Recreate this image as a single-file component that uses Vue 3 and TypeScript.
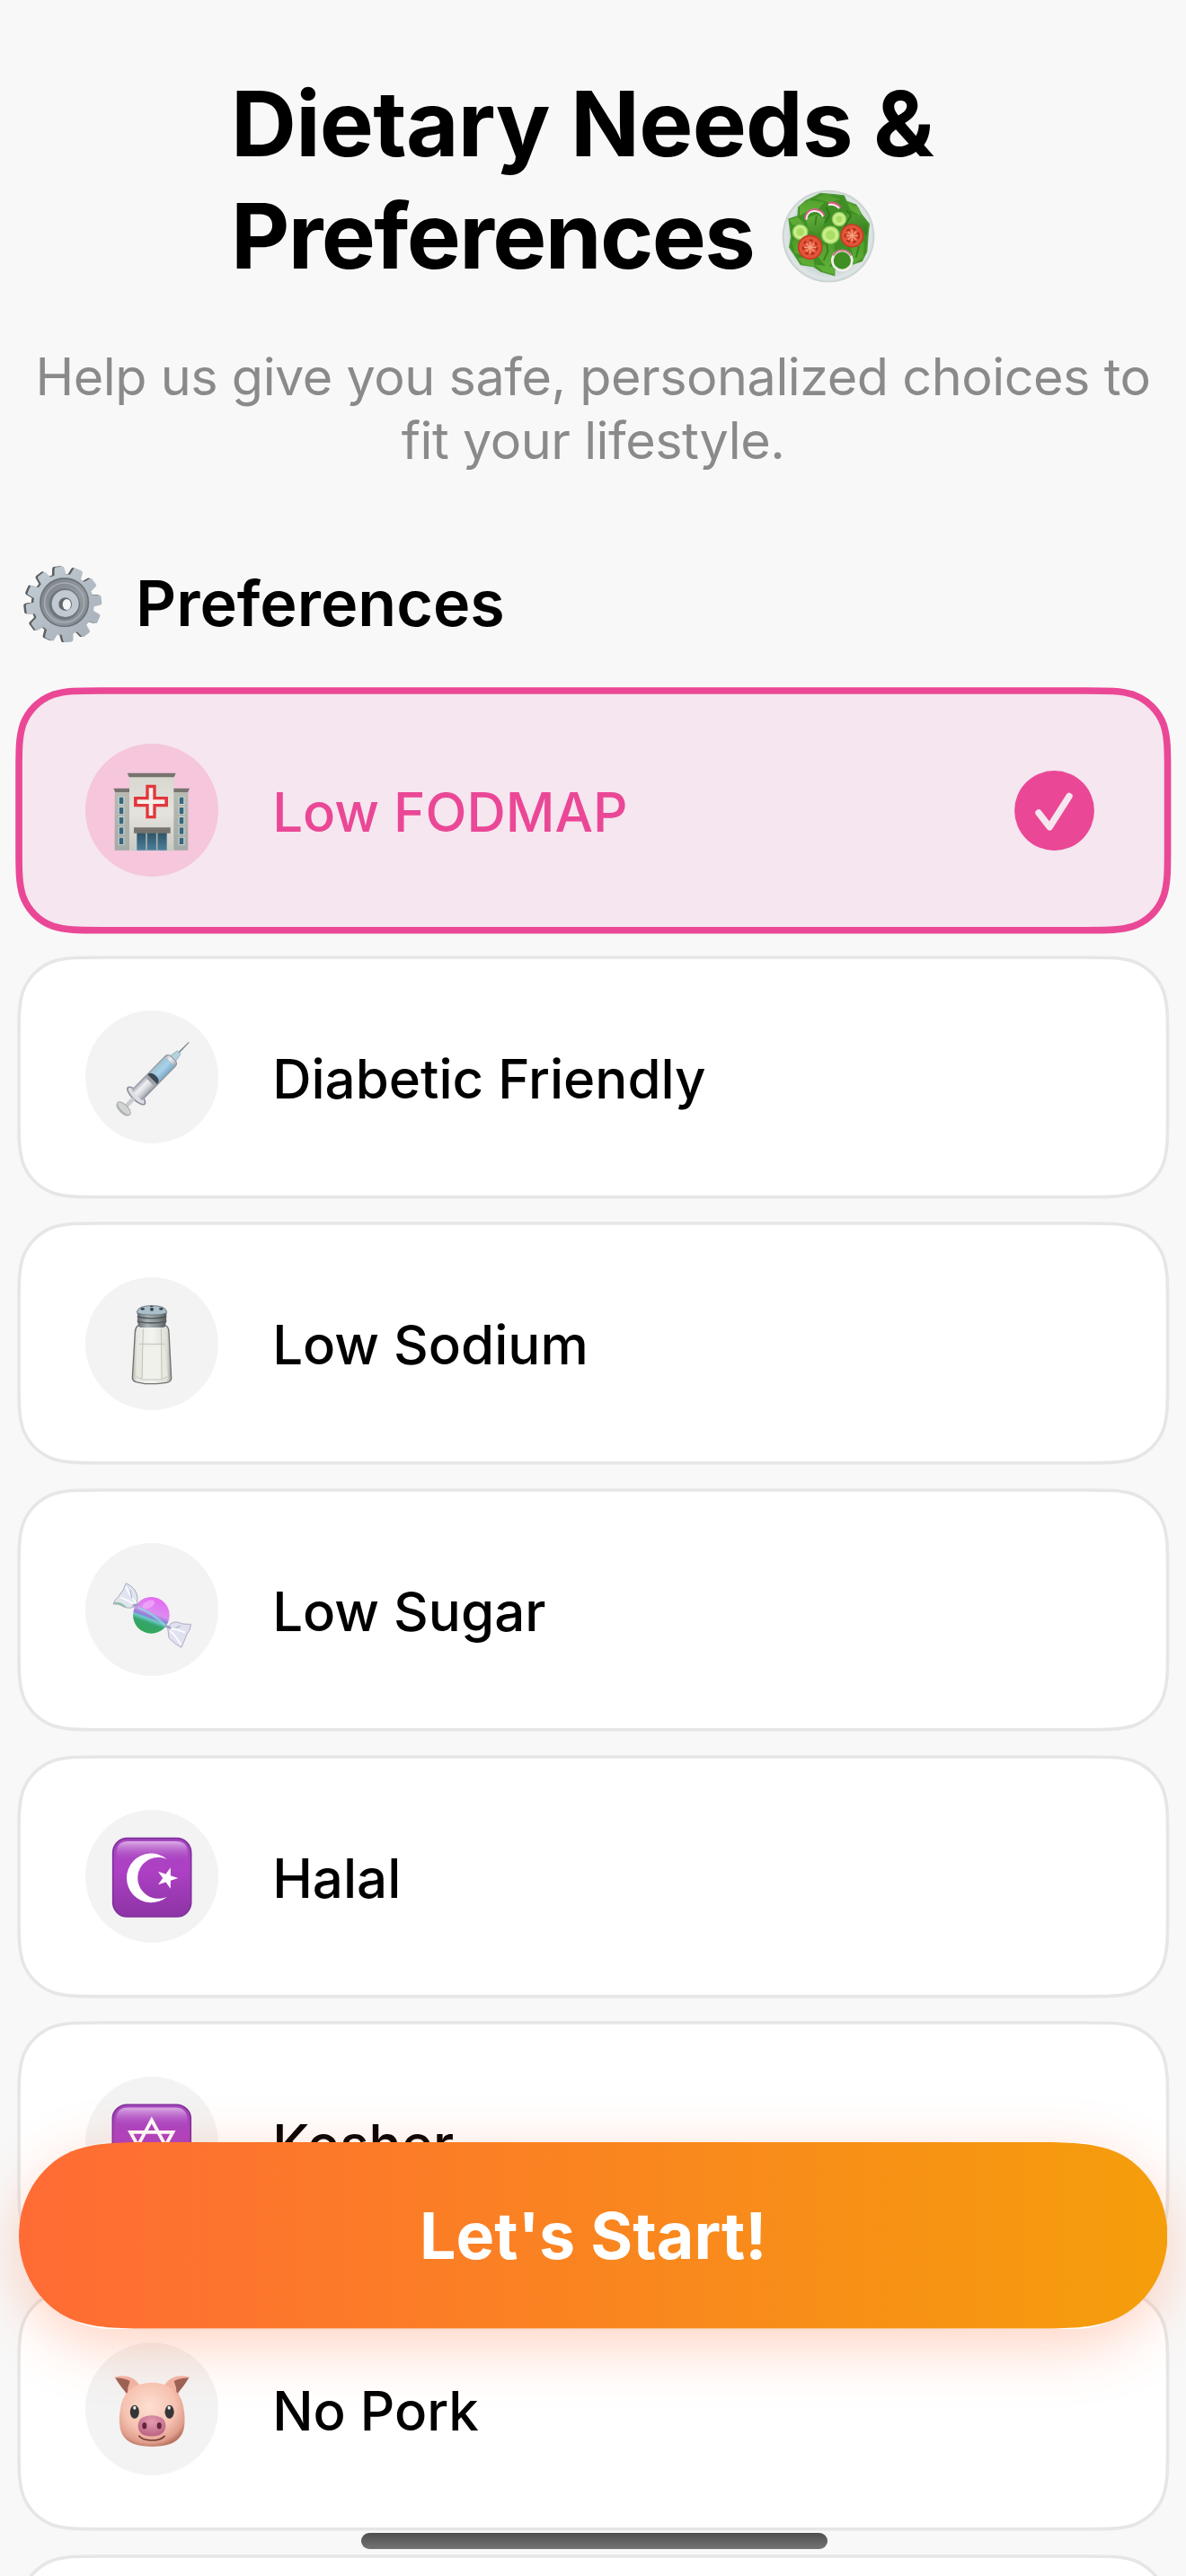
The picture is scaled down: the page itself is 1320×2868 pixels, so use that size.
<script setup lang="ts">
interface Preference {
  id: string
  label: string
  selected?: boolean
}

const preferences: Preference[] = [
  { id: 'fodmap', label: 'Low FODMAP', selected: true },
  { id: 'diabetic', label: 'Diabetic Friendly' },
  { id: 'sodium', label: 'Low Sodium' },
  { id: 'sugar', label: 'Low Sugar' },
  { id: 'halal', label: 'Halal' },
  { id: 'kosher', label: 'Kosher' },
  { id: 'pork', label: 'No Pork' },
  { id: 'last', label: '' },
]

// Outline of a rectangle with continuously curved corners.
function smoothRect(x: number, y: number, w: number, h: number, r: number): string {
  const X = x + w
  const Y = y + h
  const a = 1.528665 * r, b = 1.088493 * r, c = 0.868407 * r
  const d = 0.631494 * r, e = 0.074911 * r, f = 0.372824 * r, g = 0.16906 * r
  return [
    `M${x + a} ${y}H${X - a}`,
    `C${X - b} ${y} ${X - c} ${y} ${X - d} ${y + e}`,
    `C${X - f} ${y + g} ${X - g} ${y + f} ${X - e} ${y + d}`,
    `C${X} ${y + c} ${X} ${y + b} ${X} ${y + a}V${Y - a}`,
    `C${X} ${Y - b} ${X} ${Y - c} ${X - e} ${Y - d}`,
    `C${X - g} ${Y - f} ${X - f} ${Y - g} ${X - d} ${Y - e}`,
    `C${X - c} ${Y} ${X - b} ${Y} ${X - a} ${Y}H${x + a}`,
    `C${x + b} ${Y} ${x + c} ${Y} ${x + d} ${Y - e}`,
    `C${x + f} ${Y - g} ${x + g} ${Y - f} ${x + e} ${Y - d}`,
    `C${x} ${Y - c} ${x} ${Y - b} ${x} ${Y - a}V${y + a}`,
    `C${x} ${y + b} ${x} ${y + c} ${x + e} ${y + d}`,
    `C${x + g} ${y + f} ${x + f} ${y + g} ${x + d} ${y + e}`,
    `C${x + c} ${y} ${x + b} ${y} ${x + a} ${y}Z`,
  ].join('')
}

// Capsule whose ends ease into the straight edges.
function smoothPill(w: number, h: number): string {
  const r = h / 2
  const p = (n: number) => n * r
  return [
    `M${p(1.5287)} 0H${w - p(1.5287)}`,
    `C${w - p(1.0885)} 0 ${w - p(0.8684)} 0 ${w - p(0.6315)} ${p(0.0749)}`,
    `C${w - p(0.264)} ${p(0.192)} ${w} ${p(0.57)} ${w} ${r}`,
    `C${w} ${h - p(0.57)} ${w - p(0.264)} ${h - p(0.192)} ${w - p(0.6315)} ${h - p(0.0749)}`,
    `C${w - p(0.8684)} ${h} ${w - p(1.0885)} ${h} ${w - p(1.5287)} ${h}H${p(1.5287)}`,
    `C${p(1.0885)} ${h} ${p(0.8684)} ${h} ${p(0.6315)} ${h - p(0.0749)}`,
    `C${p(0.264)} ${h - p(0.192)} 0 ${h - p(0.57)} 0 ${r}`,
    `C0 ${p(0.57)} ${p(0.264)} ${p(0.192)} ${p(0.6315)} ${p(0.0749)}`,
    `C${p(0.8684)} 0 ${p(1.0885)} 0 ${p(1.5287)} 0Z`,
  ].join('')
}

function gear(cx: number, cy: number, inner: number, outer: number): string {
  const points: string[] = []
  for (let i = 0; i < 12; i++) {
    const mid = -97 + i * 30
    const corners: [number, number][] = [[-8.5, inner], [-5, outer], [5, outer], [8.5, inner]]
    for (const [offset, radius] of corners) {
      const t = ((mid + offset) * Math.PI) / 180
      points.push(`${(cx + radius * Math.cos(t)).toFixed(1)} ${(cy + radius * Math.sin(t)).toFixed(1)}`)
    }
  }
  return `M${points.join('L')}Z`
}

function star(cx: number, cy: number, outer: number, inner: number): string {
  const points: string[] = []
  for (let i = 0; i < 10; i++) {
    const radius = i % 2 ? inner : outer
    const t = (i * 36 * Math.PI) / 180
    points.push(`${(cx + radius * Math.cos(t)).toFixed(1)} ${(cy + radius * Math.sin(t)).toFixed(1)}`)
  }
  return `M${points.join('L')}Z`
}

const cardPath = smoothRect(5, 5, 1278.6, 266.7, 60)
const pillPath = smoothPill(1278.4, 207.5)
const gearPath = gear(168, 159, 96, 121)
const starPath = star(288, 243, 37, 14.5)
const windowRows = [204, 238, 271, 305, 339]
</script>

<template>
  <main class="screen">
    <header class="header">
      <h1 class="title">
        <span class="title-line">Dietary Needs &amp;</span>
        <span class="title-line">
          <span class="title-word">Preferences</span>
          <svg class="salad" viewBox="0 0 375 375" aria-hidden="true">
            <defs>
              <radialGradient id="plate"><stop offset=".8" stop-color="#cfd8d8" /><stop offset=".93" stop-color="#dfe6e8" /><stop offset="1" stop-color="#c6cecb" /></radialGradient>
              <linearGradient id="leafA" x1="0" y1="0" x2="1" y2="1"><stop stop-color="#6cb83f" /><stop offset="1" stop-color="#2f7a1c" /></linearGradient>
              <linearGradient id="leafB" x1="0" y1="0" x2="0" y2="1"><stop stop-color="#4d9c2b" /><stop offset="1" stop-color="#63b239" /></linearGradient>
            </defs>
            <circle cx="186" cy="189" r="154" fill="url(#plate)" />
            <path d="M132 60L160 46L206 50L238 54L246 72L278 84L296 116L322 148L318 182L314 240L298 272L262 284L240 300L206 298L206 320L160 306L136 290L94 284L72 250L56 226L62 190L54 132L84 122L86 92L112 70Z" fill="#3f8f25" stroke="#4f9c34" stroke-width="4" stroke-linejoin="round" />
            <path d="M90 120L90 88L122 68L172 76L150 100L112 108Z M140 62L176 48L226 66L188 76Z M248 74L288 94L294 122L258 100Z" fill="url(#leafB)" />
            <path d="M56 134L84 126L108 148L66 152Z M110 130L146 116L176 132L158 184L120 170Z M248 112L300 122L318 150L314 190L284 150L240 146Z" fill="url(#leafA)" />
            <path d="M64 206L88 192L96 250L74 246Z M84 262L134 256L140 290L98 282Z M160 222L204 210L208 258L184 298L150 256Z M262 228L306 206L302 260L272 280Z M140 284L206 292L204 316L168 306Z" fill="url(#leafB)" />
            <path d="M178 92L190 118L174 144M246 102L262 120L240 156M180 210L184 240L170 270M288 222L278 260M146 120L142 152M100 160L118 180" fill="none" stroke="#2a6d19" stroke-width="5" opacity=".75" />
            <path d="M110 132C110 90 166 94 170 122M186 80Q210 72 226 94" fill="none" stroke="#d85c82" stroke-width="9" />
            <path d="M112 134C114 96 160 98 168 124M186 84Q208 80 222 96" fill="none" stroke="#f8edf0" stroke-width="6" />
            <g fill="#c9ee8d" stroke="#8cc552" stroke-width="4"><circle cx="92" cy="175" r="25" /><circle cx="222" cy="132" r="23" /><circle cx="193" cy="185" r="29" /></g>
            <g fill="#aade65"><circle cx="92" cy="175" r="13" /><circle cx="222" cy="132" r="11" /><circle cx="193" cy="185" r="16" /></g>
            <g fill="#e25638" stroke="#c83a28" stroke-width="5"><circle cx="125" cy="226" r="39" /><circle cx="265" cy="187" r="37" /></g>
            <g fill="none" stroke="#b52f1d" stroke-width="8" stroke-dasharray="11 10"><circle cx="125" cy="226" r="23" /><circle cx="265" cy="187" r="22" /></g>
            <path d="M125 206V246M105 226H145M111 212L139 240M139 212L111 240M265 167V207M245 187H285M251 173L279 201M279 173L251 201" stroke="#f5a081" stroke-width="4" />
            <g fill="none"><circle cx="232" cy="270" r="33" stroke="#f1efe8" stroke-width="8" /><path d="M202 254A34 34 0 0 1 262 254" stroke="#cf6c8c" stroke-width="5" /></g>
          </svg>
        </span>
      </h1>
      <p class="subtitle">Help us give you safe, personalized choices to<br />fit your lifestyle.</p>
    </header>

    <section>
      <div class="section-head">
        <svg class="gear" viewBox="0 0 330 330" aria-hidden="true">
          <defs>
            <linearGradient id="steel" x1="0" y1="0" x2="1" y2="1"><stop stop-color="#c3ced5" /><stop offset=".5" stop-color="#b4bdc5" /><stop offset="1" stop-color="#a7afb8" /></linearGradient>
            <linearGradient id="dish" x1="0" y1="0" x2="1" y2="1"><stop stop-color="#7c8287" /><stop offset=".6" stop-color="#92999f" /><stop offset="1" stop-color="#7b8289" /></linearGradient>
          </defs>
          <path :d="gearPath" transform="translate(-7 -1)" fill="#5d5e5f" stroke="#5d5e5f" stroke-width="13" stroke-linejoin="round" />
          <path :d="gearPath" fill="url(#steel)" stroke="url(#steel)" stroke-width="12" stroke-linejoin="round" />
          <circle cx="170" cy="152" r="83" fill="url(#dish)" />
          <circle cx="170" cy="152" r="80" fill="none" stroke="#6a7176" stroke-width="4" />
          <circle cx="170" cy="153" r="66" fill="none" stroke="#a6adb2" stroke-width="5" />
          <circle cx="170" cy="158" r="52" fill="#6d757d" />
          <circle cx="173" cy="156" r="45" fill="#c1cad1" />
          <circle cx="173" cy="158" r="22" fill="#63686c" />
          <ellipse cx="178" cy="159" rx="14" ry="18" fill="#f4f5f5" />
        </svg>
        <h2 class="section-title">Preferences</h2>
      </div>

      <ul class="list">
        <li v-for="item in preferences" :key="item.id" class="card" :class="{ selected: item.selected }">
          <svg class="card-shape" viewBox="0 0 1288.6 276.7" aria-hidden="true"><path :d="cardPath" /></svg>
          <span class="badge">
            <svg v-if="item.id === 'fodmap'" class="glyph" viewBox="15 25 444 444" aria-hidden="true">
              <defs>
                <linearGradient id="wall" x1="0" y1="0" x2="0" y2="1"><stop stop-color="#d8d8cf" /><stop offset=".5" stop-color="#e4e3dc" /><stop offset="1" stop-color="#c9cac4" /></linearGradient>
                <linearGradient id="wing" x1="0" y1="0" x2="0" y2="1"><stop stop-color="#b9bbb1" /><stop offset="1" stop-color="#a4aaa7" /></linearGradient>
                <linearGradient id="door" x1="0" y1="0" x2="0" y2="1"><stop stop-color="#2e5366" /><stop offset="1" stop-color="#4b7f9b" /></linearGradient>
              </defs>
              <path d="M113 182H162V381H113ZM309 182H358V381H309Z" fill="url(#wing)" />
              <path d="M109 174H162V187H115ZM309 174H363L357 187H309Z" fill="#77736f" />
              <path d="M162 133H310V383H162Z" fill="url(#wall)" />
              <path d="M155 123H317L311 137H161Z" fill="#77736f" />
              <g v-for="y in windowRows" :key="y">
                <rect x="125" :y="y - 2" width="20" height="26" fill="#dce2df" /><rect x="128" :y="y" width="14" height="22" fill="#37677e" />
                <rect x="326" :y="y - 2" width="20" height="26" fill="#dce2df" /><rect x="329" :y="y" width="14" height="22" fill="#37677e" />
              </g>
              <path d="M217 162H251V202H291V236H251V275H217V236H177V202H217Z" fill="#e2373e" />
              <path d="M227 173H241V212H280V226H241V265H227V226H188V212H227Z" fill="#f5efe9" />
              <rect x="187" y="322" width="100" height="59" fill="url(#door)" />
              <path d="M219 322V381M254 322V381" stroke="#a9b2ae" stroke-width="5" />
              <path d="M177 305H299V324H177Z" fill="#77736f" />
            </svg>
            <svg v-else-if="item.id === 'diabetic'" class="glyph" viewBox="15 15 444 444" aria-hidden="true">
              <defs>
                <linearGradient id="barrel"><stop stop-color="#a7a9b2" /><stop offset=".35" stop-color="#f0f0f4" /><stop offset=".65" stop-color="#d3d4da" /><stop offset="1" stop-color="#989ba4" /></linearGradient>
                <linearGradient id="fluid"><stop stop-color="#9dc3d4" /><stop offset=".5" stop-color="#a8d2ea" /><stop offset="1" stop-color="#7cadc9" /></linearGradient>
              </defs>
              <g transform="translate(361 121) rotate(44.5)">
                <path d="M-1.5 0H1.5L3 58H-3Z" fill="#78858c" />
                <path d="M-8 48H8L13 78H-13Z" fill="#b4d2da" stroke="#83a0a8" stroke-width="2" />
                <path d="M-24 88Q-22 76 -10 76H10Q22 76 24 88V246H-24Z" fill="url(#barrel)" stroke="#8a9197" stroke-width="3" />
                <path d="M-21 90H21V164H-21Z" fill="url(#fluid)" />
                <ellipse cy="170" rx="22" ry="13" fill="#3f4754" />
                <path d="M-19 174H19V186H-19Z" fill="#9ea2aa" />
                <ellipse cy="251" rx="39" ry="14" fill="#dedfe4" stroke="#8b90a0" stroke-width="5" />
                <path d="M-24 232H24V249H-24Z" fill="url(#barrel)" />
                <path d="M-7 264H7V310H-7Z" fill="#c9cbcc" />
                <ellipse cy="314" rx="29" ry="14" fill="#b4b6b5" />
                <ellipse cy="310" rx="29" ry="12" fill="#d2d4d3" stroke="#a7aaaa" stroke-width="3" />
              </g>
            </svg>
            <svg v-else-if="item.id === 'sodium'" class="glyph" viewBox="15 6 444 444" aria-hidden="true">
              <defs>
                <linearGradient id="cap"><stop stop-color="#62686b" /><stop offset=".35" stop-color="#a9b4b8" /><stop offset=".7" stop-color="#858d90" /><stop offset="1" stop-color="#55595b" /></linearGradient>
                <linearGradient id="glass"><stop stop-color="#b3b4ad" /><stop offset=".12" stop-color="#e7e8e2" /><stop offset=".5" stop-color="#f4f4f0" /><stop offset=".88" stop-color="#dedfd7" /><stop offset="1" stop-color="#a1a39b" /></linearGradient>
              </defs>
              <path d="M190 168H284Q294 174 294 190L302 345Q300 356 286 358L254 362H214L184 356Q172 352 172 342L181 190Q181 176 190 168Z" fill="url(#glass)" stroke="#6f7270" stroke-width="4" />
              <path d="M196 240Q236 226 278 236L291 344L260 352H212L183 342Z" fill="#e8e8df" />
              <path d="M206 238Q236 232 270 236L266 350H208Z" fill="#f1f1eb" />
              <path d="M194 229H280M208 178L204 344M268 178L270 344M184 338L206 348H266L292 338" fill="none" stroke="#c1c3bb" stroke-width="3" />
              <path d="M187 120H287L285 140Q288 154 283 162Q284 172 274 174H200Q190 172 191 162Q186 154 190 140Z" fill="url(#cap)" />
              <path d="M188 138Q237 149 286 138M190 154Q237 164 284 154" fill="none" stroke="#4f5759" stroke-width="4" />
              <path d="M187 123Q189 101 237 101T287 123Q280 132 237 132T187 123Z" fill="#a9bfc9" stroke="#747c80" stroke-width="3" />
              <g fill="#35434a"><circle cx="237" cy="113" r="6" /><ellipse cx="206" cy="112" rx="7" ry="4" /><ellipse cx="268" cy="112" rx="7" ry="4" /><ellipse cx="236" cy="103" rx="6" ry="2" /></g>
            </svg>
            <svg v-else-if="item.id === 'sugar'" class="glyph" viewBox="15 895 444 444" aria-hidden="true">
              <defs>
                <linearGradient id="ball" x1=".65" y1="0" x2=".28" y2="1"><stop stop-color="#e668f2" /><stop offset=".42" stop-color="#dc8df0" /><stop offset=".54" stop-color="#8a80d6" /><stop offset=".6" stop-color="#6cc9c9" /><stop offset=".7" stop-color="#35a46c" /><stop offset="1" stop-color="#34a856" /></linearGradient>
              </defs>
              <path d="M151 1029Q188 1046 189 1080L186 1104Q164 1118 142 1107Q126 1096 108 1099Q112 1084 125 1074Q142 1056 151 1029Z" fill="#dfe4ef" stroke="#aaa9bd" stroke-width="3" />
              <path d="M290 1178Q300 1156 322 1159Q340 1168 367 1166Q368 1184 354 1199Q346 1222 335 1244Q310 1230 294 1212Z" fill="#e0e1f0" stroke="#b5a9c4" stroke-width="3" />
              <path d="M150 1040Q158 1062 186 1098M132 1076Q158 1086 182 1102M298 1180Q326 1184 348 1194M298 1188Q318 1206 334 1234" fill="none" stroke="#fafaff" stroke-width="6" />
              <path d="M165 1052L170 1080M334 1172L316 1178" fill="none" stroke="#b6b8d2" stroke-width="4" />
              <path d="M112 1096Q130 1092 148 1108" fill="none" stroke="#77bd92" stroke-width="5" />
              <circle cx="235" cy="1136" r="61" fill="url(#ball)" />
              <path d="M190 1110Q240 1128 284 1172" fill="none" stroke="#8ad7df" stroke-width="8" opacity=".75" />
              <ellipse cx="226" cy="1100" rx="22" ry="12" fill="#f3aefa" opacity=".7" transform="rotate(-25 226 1100)" />
              <path d="M176 1103L190 1101M282 1172L298 1178" stroke="#9aa0c4" stroke-width="8" stroke-linecap="round" />
            </svg>
            <svg v-else-if="item.id === 'halal'" class="glyph" viewBox="15 15 444 444" aria-hidden="true">
              <defs>
                <linearGradient id="violet" x1="0" y1="0" x2="0" y2="1"><stop stop-color="#a347bd" /><stop offset=".4" stop-color="#ae40c4" /><stop offset="1" stop-color="#8c34a5" /></linearGradient>
                <linearGradient id="shine" x1="0" y1="0" x2="0" y2="1"><stop stop-color="#dcaee8" /><stop offset="1" stop-color="#b24dc8" stop-opacity="0" /></linearGradient>
              </defs>
              <rect x="107" y="110" width="261" height="262" rx="48" fill="url(#violet)" stroke="#80309b" stroke-width="5" />
              <path d="M119 186V160Q119 120 160 120H316Q357 120 357 160V186Z" fill="url(#shine)" />
              <path d="M288 180A82 82 0 1 0 288 305A69 69 0 1 1 288 180Z" fill="#fff" />
              <path :d="starPath" fill="#fff" />
            </svg>
            <svg v-else-if="item.id === 'kosher'" class="glyph" viewBox="227 201 351 364" preserveAspectRatio="none" aria-hidden="true">
              <rect x="299" y="278" width="206" height="214" rx="38" fill="url(#violet)" stroke="#80309b" stroke-width="4" />
              <path d="M308 340V320Q308 286 340 286H464Q496 286 496 320V340Z" fill="url(#shine)" />
              <path d="M402 320L456 424H348ZM346 353H458L402 458Z" fill="none" stroke="#fff" stroke-width="9" />
            </svg>
            <svg v-else-if="item.id === 'pork'" class="glyph" viewBox="227 930 351 364" preserveAspectRatio="none" aria-hidden="true">
              <defs>
                <radialGradient id="face" cx=".46" cy=".36" r=".66"><stop stop-color="#fde0d2" /><stop offset=".6" stop-color="#f6c3b2" /><stop offset=".88" stop-color="#e19e8c" /><stop offset="1" stop-color="#b97462" /></radialGradient>
                <radialGradient id="snout" cx=".5" cy=".3" r=".7"><stop stop-color="#e49bb0" /><stop offset="1" stop-color="#bb6382" /></radialGradient>
              </defs>
              <path d="M303 1025Q350 1012 371 1048L336 1080Q326 1040 303 1025ZM503 1025Q456 1012 435 1048L471 1080Q480 1040 503 1025Z" fill="#f1b5a3" />
              <path d="M306 1027Q330 1026 345 1036Q338 1052 338 1070Q324 1058 306 1027ZM500 1027Q476 1026 461 1036Q468 1052 468 1070Q482 1058 500 1027Z" fill="#9b6256" />
              <path d="M403 1040C445 1040 475 1062 484 1098C490 1126 491 1150 486 1170C476 1203 448 1215 403 1215S330 1203 320 1170C315 1150 316 1126 322 1098C331 1062 361 1040 403 1040Z" fill="url(#face)" />
              <g fill="#343536"><ellipse cx="357" cy="1120" rx="12" ry="18.5" /><ellipse cx="449" cy="1120" rx="12" ry="18.5" /></g>
              <g fill="#e9eded"><ellipse cx="357" cy="1109" rx="4" ry="5" /><ellipse cx="448" cy="1109" rx="4" ry="5" /></g>
              <path d="M402 1130C427 1130 440 1142 439 1160Q436 1187 402 1187T366 1160C365 1142 378 1130 402 1130Z" fill="url(#snout)" />
              <g fill="#64263b"><ellipse cx="383" cy="1158" rx="6" ry="9" /><ellipse cx="422" cy="1158" rx="6" ry="9" /></g>
              <path d="M368 1185Q376 1198 402 1198T437 1185" fill="none" stroke="#70382f" stroke-width="4" />
            </svg>
          </span>
          <span class="label">{{ item.label }}</span>
          <svg v-if="item.selected" class="check" viewBox="0 0 89 89" aria-hidden="true">
            <circle cx="44.5" cy="44.5" r="44.4" fill="#ea4896" />
            <path d="M27 47L39.2 62.8L61 28.5" fill="none" stroke="#f5e6ef" stroke-width="7.4" stroke-linecap="round" stroke-linejoin="round" />
          </svg>
        </li>
      </ul>
    </section>

    <button class="start" type="button">
      <svg class="start-shape" viewBox="0 0 1278.4 207.5" aria-hidden="true">
        <defs><linearGradient id="sunset"><stop stop-color="#ff6b35" /><stop offset="1" stop-color="#f59e0b" /></linearGradient></defs>
        <path :d="pillPath" fill="url(#sunset)" />
      </svg>
      <span class="start-text">Let's Start!</span>
    </button>
    <div class="home-indicator"></div>
  </main>
</template>

<style>
html,
body {
  margin: 0;
  background: #f8f8f8;
}
</style>

<style scoped>
.screen {
  position: relative;
  box-sizing: border-box;
  width: 1320px;
  height: 2868px;
  padding-top: 75px;
  overflow: hidden;
  background: #f8f8f8;
  color: #000;
  font-family: Inter, "Liberation Sans", sans-serif;
}
.title {
  margin: 0 0 0 257px;
  font-size: 101px;
  line-height: 125px;
  font-weight: 700;
  letter-spacing: -0.75px;
  white-space: nowrap;
}
.title-line {
  display: flex;
  height: 125px;
}
.title-word {
  width: 603px;
  letter-spacing: -1.65px;
}
.salad {
  width: 125px;
  height: 125px;
}
.subtitle {
  margin: 58.5px 0 0;
  color: #8a8a8a;
  font-size: 57.5px;
  line-height: 71.7px;
  letter-spacing: -0.47px;
  text-align: center;
  white-space: nowrap;
}
.section-head {
  display: flex;
  align-items: center;
  height: 110px;
  margin-top: 90.2px;
  padding-left: 15px;
}
.gear {
  width: 110px;
  height: 110px;
  margin-top: 5.6px;
}
.section-title {
  margin: 0 0 0 26px;
  font-size: 70px;
  line-height: 110px;
  font-weight: 600;
}
.list {
  display: flex;
  flex-direction: column;
  gap: 30px;
  margin: 41.8px 20.7px 0;
  padding: 0;
  list-style: none;
}
.card {
  position: relative;
  display: flex;
  flex: none;
  align-items: center;
  box-sizing: border-box;
  height: 266.7px;
  padding: 0 81px 0 74.5px;
}
.card-shape {
  position: absolute;
  top: -5px;
  left: -5px;
  width: 1288.6px;
  height: 276.7px;
  fill: #fff;
  stroke: #e6e6e6;
  stroke-width: 3.6px;
}
.selected .card-shape {
  fill: #f5e6ef;
  stroke: #ea4896;
  stroke-width: 7.6px;
}
.badge {
  position: relative;
  flex: none;
  width: 148px;
  height: 148px;
  border-radius: 50%;
  background: #f3f3f3;
}
.selected .badge {
  background: #f5c6dc;
}
.glyph {
  display: block;
  width: 148px;
  height: 148px;
}
.label {
  position: relative;
  flex: 1;
  margin-left: 60px;
  padding-top: 3.6px;
  font-size: 60px;
  line-height: 72px;
  font-weight: 500;
  white-space: nowrap;
}
.selected .label {
  color: #ea4896;
}
.check {
  position: relative;
  width: 89px;
  height: 89px;
}
.start {
  position: absolute;
  left: 21px;
  bottom: 275.3px;
  display: flex;
  align-items: center;
  justify-content: center;
  width: 1278.4px;
  height: 207.5px;
  padding: 0;
  border: 0;
  border-radius: 104px;
  background: none;
  box-shadow: 0 18px 66px rgba(255, 107, 53, 0.3);
  color: #fff;
  font: 700 71.7px/86px Inter, "Liberation Sans", sans-serif;
}
.start-shape {
  position: absolute;
  inset: 0;
  width: 100%;
  height: 100%;
}
.start-text {
  position: relative;
}
.home-indicator {
  position: absolute;
  bottom: 30px;
  left: 402px;
  width: 519px;
  height: 18.5px;
  border-radius: 9.25px;
  background: linear-gradient(#4e4e4e, #747474);
}
</style>
